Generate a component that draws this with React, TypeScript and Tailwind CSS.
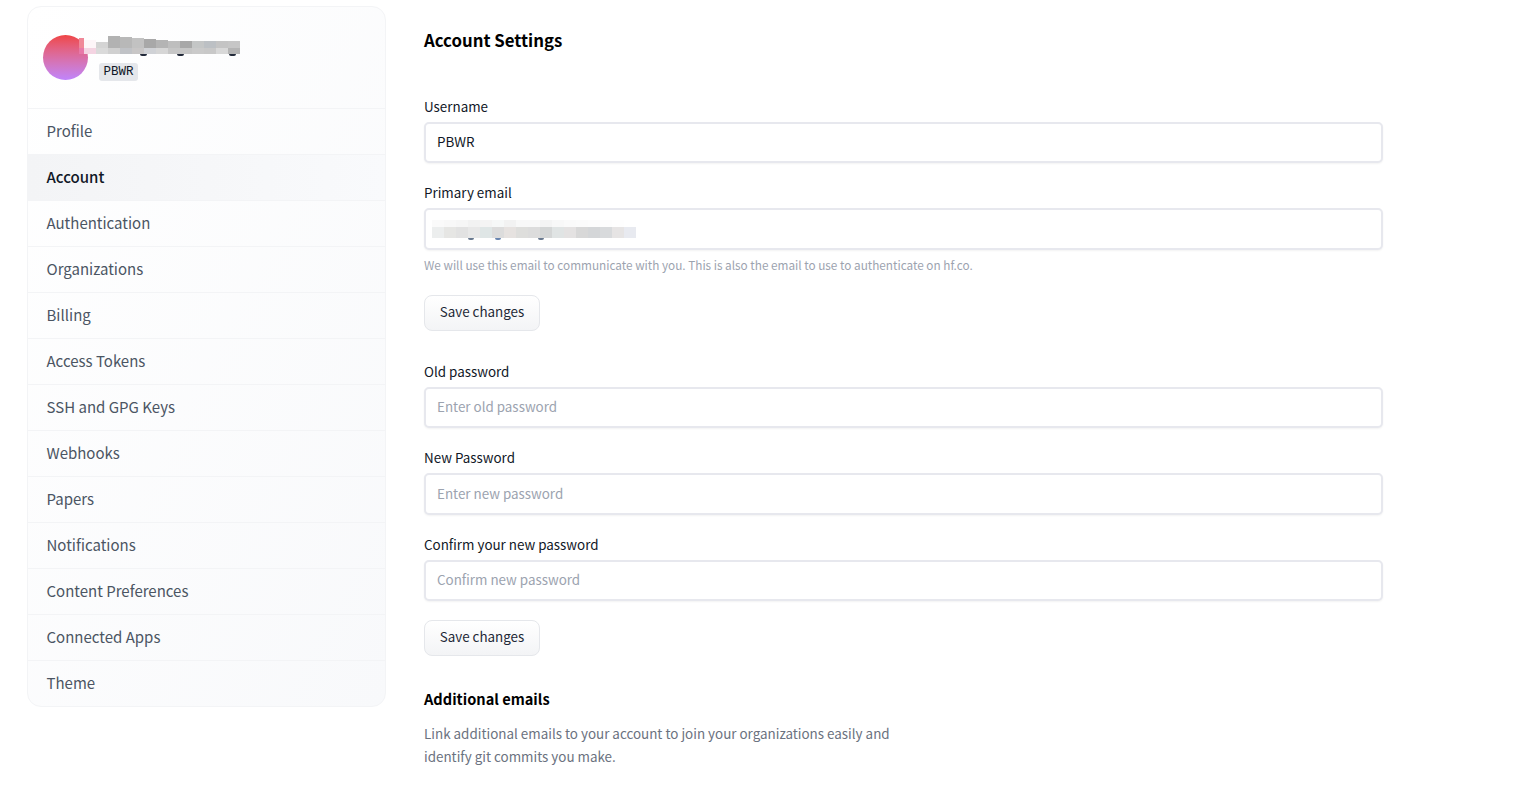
import React from 'react';

const font = { fontFamily: '"Noto Sans CJK SC", "Source Sans Pro", sans-serif' };

const navItems = [
  'Profile',
  'Account',
  'Authentication',
  'Organizations',
  'Billing',
  'Access Tokens',
  'SSH and GPG Keys',
  'Webhooks',
  'Papers',
  'Notifications',
  'Content Preferences',
  'Connected Apps',
  'Theme',
];

// mosaic over the blurred out name: first cell is the pink sliver next to the avatar
const nameTop = [
  { c: '#f08898', h: 'h-[10px]' },
  { c: '#fdf5f8', h: 'h-[8px]' },
  { c: '#d4d4d4', h: 'h-[6px]' },
  { c: '#b2b2b2', h: 'h-[12px]' },
  { c: '#b8b8b8', h: 'h-[11px]' },
  { c: '#c2c2c2', h: 'h-[10px]' },
  { c: '#a8a8a8', h: 'h-[9px]' },
  { c: '#b4b4b4', h: 'h-[8px]' },
  { c: '#bebebe', h: 'h-[7px]' },
  { c: '#a8a8a8', h: 'h-[7px]' },
  { c: '#c4c6c6', h: 'h-[7px]' },
  { c: '#bcc0c4', h: 'h-[7px]' },
  { c: '#c4c4c4', h: 'h-[7px]' },
  { c: '#c6c6c6', h: 'h-[7px]' },
];
const nameBottom = ['#e878a8', '#f4d4e2', '#dadada', '#d0d0d0', '#c0c2c6', '#c8c6c6', '#d0d2d6', '#d6d6d6', '#c6c6c6', '#c6c6c6', '#cacaca', '#c8c8c8', '#d8d8d8', '#b4b4b4'];

const emailTop = ['#fafafa', '#f8f8f8', '#f6f6f6', '#f2f2f2', '#f4f4f4', '#f6f8f8', '#f2f2f2', '#f8f8f8', '#f8f8f8', '#f4f4f4', '#f8f8f8', '#fafafa', '#fbfbfb', '#fcfcfc', '#fdfdfd', '#fefefe', '#ffffff'];
const emailBlocks = ['#eceeee', '#e6e6e4', '#e2e2e2', '#e8e8e8', '#dfe6e6', '#dcdcdc', '#e6e2e0', '#dededc', '#dcdcdc', '#d4d6d6', '#e0e4e4', '#e4e2e2', '#d8d8d8', '#d4d6d8', '#d8dadc', '#e6e4e4', '#e8eaf0'];

function Field({ label, placeholder, value, children }: { label: string; placeholder?: string; value?: string; children?: React.ReactNode }) {
  return (
    <div>
      <label className="block text-[13.4px] leading-[18px] text-[#111827] mb-[7px]">{label}</label>
      <div className="relative">
        <input
          readOnly
          value={value}
          placeholder={placeholder}
          className="block w-full h-[41.5px] pl-[11px] pr-[12px] pb-[3px] text-[13.4px] text-[#111827] placeholder:text-[#9ca3af] bg-white border-2 border-[#e7e8ee] rounded-[5px] outline-none shadow-xs"
          style={font}
        />
        {children}
      </div>
    </div>
  );
}

function SaveButton() {
  return (
    <button className="block w-[116px] h-[36px] pb-[3px] text-[13.4px] text-[#1f2937] border border-[#e5e7eb] rounded-[8px] bg-gradient-to-b from-white to-[#f3f4f6]" style={font}>
      Save changes
    </button>
  );
}

export default function App() {
  return (
    <div className="flex bg-white h-[793px] overflow-hidden pl-[27px] pt-[6px]" style={font}>
      <aside className="w-[359px] h-[701px] shrink-0 border border-[#f3f4f6] rounded-[14px] bg-gradient-to-br from-white to-[#f8f9fb] overflow-hidden">
        <div className="relative h-[101px] flex items-start pl-[15px] pt-[28px]">
          <div className="w-[45px] h-[45px] rounded-full bg-gradient-to-b from-[#ef4444] to-[#c084fc]" />
          <div className="ml-[11px] pt-[28px]">
            <span className="block w-[39px] h-[18px] leading-[18px] text-center bg-[#e5e7eb] rounded-[3px] text-[12.5px] text-[#111827]" style={{ fontFamily: '"Liberation Mono", monospace' }}>
              PBWR
            </span>
          </div>
          <div className="absolute left-[51px] top-[29px] flex flex-col">
            <div className="flex items-end h-[12px]">
              {nameTop.map((b, i) => (
                <div key={i} className={(i === 0 ? 'w-[5px] ' : 'w-[12px] ') + b.h} style={{ background: b.c }} />
              ))}
            </div>
            <div className="flex">
              {nameBottom.map((c, i) => (
                <div key={i} className={(i === 0 ? 'w-[5px] ' : 'w-[12px] ') + 'h-[6px]'} style={{ background: c }} />
              ))}
            </div>
            <div className="absolute left-[61px] top-[18px] w-[7px] h-[2px] rounded-b-full bg-[#222a3a]" />
            <div className="absolute left-[98px] top-[18px] w-[7px] h-[2px] rounded-b-full bg-[#222a3a]" />
            <div className="absolute left-[150px] top-[18px] w-[7px] h-[2px] rounded-b-full bg-[#222a3a]" />
          </div>
        </div>
        {navItems.map((item) => (
          <div
            key={item}
            className={
              'h-[46px] flex items-center pl-[18.5px] pb-[1px] border-t border-[#f3f4f6] text-[15px] ' +
              (item === 'Account' ? 'bg-gradient-to-r from-[#f3f4f6] to-[#f9fafc] font-medium text-[#111827]' : 'text-[#4b5563]')
            }
          >
            {item}
          </div>
        ))}
      </aside>

      <main className="ml-[38px] w-[959px] shrink-0">
        <h1 className="mt-[22px] text-[16.8px] leading-[24px] font-semibold text-black">Account Settings</h1>
        <div className="mt-[44.9px] flex flex-col gap-[20px]">
          <Field label="Username" value="PBWR" />
          <Field label="Primary email" value="">
            <div className="absolute left-[8px] top-[12px] flex flex-col">
              <div className="flex">
                {emailTop.map((c, i) => (
                  <div key={i} className="w-[12px] h-[7px]" style={{ background: c }} />
                ))}
              </div>
              <div className="flex">
                {emailBlocks.map((c, i) => (
                  <div key={i} className="w-[12px] h-[11px]" style={{ background: c }} />
                ))}
              </div>
              <div className="absolute left-[36px] top-[18px] w-[6px] h-[2px] rounded-b-full bg-[#6a7a90]" />
              <div className="absolute left-[63px] top-[18px] w-[6px] h-[2px] rounded-b-full bg-[#6a86b0]" />
              <div className="absolute left-[106px] top-[18px] w-[6px] h-[2px] rounded-b-full bg-[#6a7a90]" />
            </div>
          </Field>
        </div>
        <p className="mt-[6px] text-[11.75px] leading-[18px] text-[#9ca3af]">
          We will use this email to communicate with you. This is also the email to use to authenticate on hf.co.
        </p>
        <div className="mt-[21px]">
          <SaveButton />
        </div>
        <div className="mt-[31px] flex flex-col gap-[20px]">
          <Field label="Old password" placeholder="Enter old password" />
          <Field label="New Password" placeholder="Enter new password" />
          <Field label="Confirm your new password" placeholder="Confirm new password" />
        </div>
        <div className="mt-[18.5px]">
          <SaveButton />
        </div>
        <h2 className="mt-[31px] text-[14.6px] leading-[24px] font-semibold text-black">Additional emails</h2>
        <p className="mt-[11px] w-[480px] text-[13.42px] leading-[23px] text-[#6b7280]">
          Link additional emails to your account to join your organizations easily and identify git commits you make.
        </p>
      </main>
    </div>
  );
}
